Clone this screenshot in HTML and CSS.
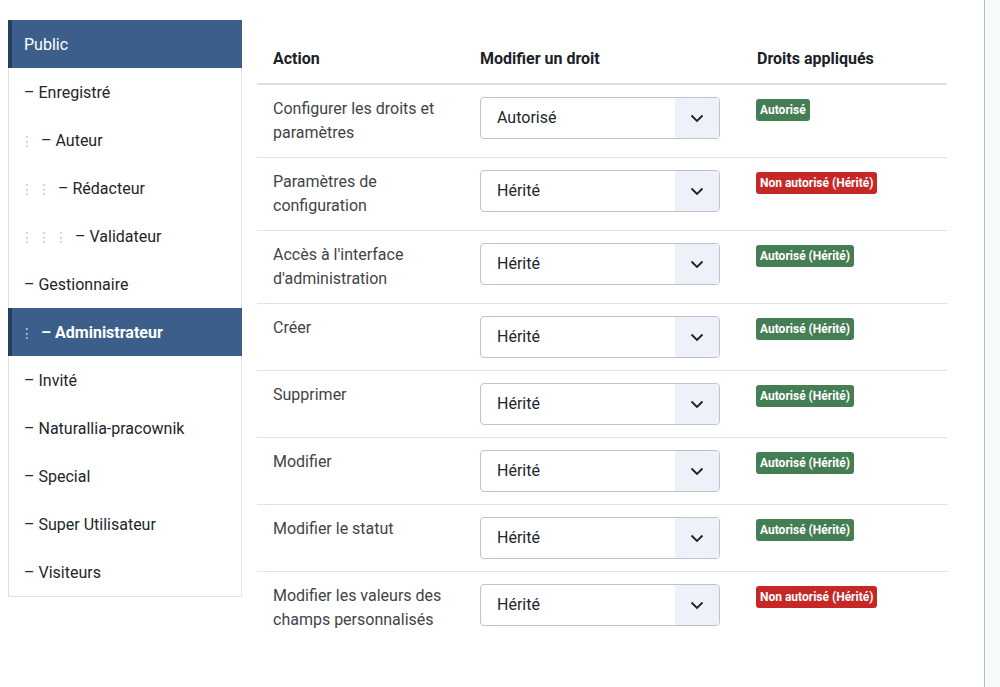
FILE: index.html
```html
<!DOCTYPE html>
<html lang="fr">
<head>
<meta charset="utf-8">
<title>Droits</title>
<link rel="stylesheet" href="styles.css">
</head>
<body>
<div class="page">
  <div class="main">
    <ul class="groups">
      <li class="item active">Public</li>
      <li class="item">– Enregistré</li>
      <li class="item"><span class="lvl">⋮</span>– Auteur</li>
      <li class="item"><span class="lvl">⋮</span><span class="lvl">⋮</span>– Rédacteur</li>
      <li class="item"><span class="lvl">⋮</span><span class="lvl">⋮</span><span class="lvl">⋮</span>– Validateur</li>
      <li class="item">– Gestionnaire</li>
      <li class="item active strong"><span class="lvl">⋮</span>– Administrateur</li>
      <li class="item">– Invité</li>
      <li class="item">– Naturallia-pracownik</li>
      <li class="item">– Special</li>
      <li class="item">– Super Utilisateur</li>
      <li class="item">– Visiteurs</li>
    </ul>
    <table class="rights">
      <thead>
        <tr><th class="c1">Action</th><th class="c2">Modifier un droit</th><th class="c3">Droits appliqués</th></tr>
      </thead>
      <tbody>
        <tr><td>Configurer les droits et paramètres</td><td><div class="select"><span class="val">Autorisé</span><span class="arrow"><svg width="16" height="16" viewBox="0 0 16 16"><path d="M2.5 5.5l5.5 5.5 5.5-5.5" fill="none" stroke="#1d2125" stroke-width="1.8"/></svg></span></div></td><td><span class="badge ok">Autorisé</span></td></tr>
        <tr><td>Paramètres de configuration</td><td><div class="select"><span class="val">Hérité</span><span class="arrow"><svg width="16" height="16" viewBox="0 0 16 16"><path d="M2.5 5.5l5.5 5.5 5.5-5.5" fill="none" stroke="#1d2125" stroke-width="1.8"/></svg></span></div></td><td><span class="badge no">Non autorisé (Hérité)</span></td></tr>
        <tr><td>Accès à l'interface d'administration</td><td><div class="select"><span class="val">Hérité</span><span class="arrow"><svg width="16" height="16" viewBox="0 0 16 16"><path d="M2.5 5.5l5.5 5.5 5.5-5.5" fill="none" stroke="#1d2125" stroke-width="1.8"/></svg></span></div></td><td><span class="badge ok">Autorisé (Hérité)</span></td></tr>
        <tr><td>Créer</td><td><div class="select"><span class="val">Hérité</span><span class="arrow"><svg width="16" height="16" viewBox="0 0 16 16"><path d="M2.5 5.5l5.5 5.5 5.5-5.5" fill="none" stroke="#1d2125" stroke-width="1.8"/></svg></span></div></td><td><span class="badge ok">Autorisé (Hérité)</span></td></tr>
        <tr><td>Supprimer</td><td><div class="select"><span class="val">Hérité</span><span class="arrow"><svg width="16" height="16" viewBox="0 0 16 16"><path d="M2.5 5.5l5.5 5.5 5.5-5.5" fill="none" stroke="#1d2125" stroke-width="1.8"/></svg></span></div></td><td><span class="badge ok">Autorisé (Hérité)</span></td></tr>
        <tr><td>Modifier</td><td><div class="select"><span class="val">Hérité</span><span class="arrow"><svg width="16" height="16" viewBox="0 0 16 16"><path d="M2.5 5.5l5.5 5.5 5.5-5.5" fill="none" stroke="#1d2125" stroke-width="1.8"/></svg></span></div></td><td><span class="badge ok">Autorisé (Hérité)</span></td></tr>
        <tr><td>Modifier le statut</td><td><div class="select"><span class="val">Hérité</span><span class="arrow"><svg width="16" height="16" viewBox="0 0 16 16"><path d="M2.5 5.5l5.5 5.5 5.5-5.5" fill="none" stroke="#1d2125" stroke-width="1.8"/></svg></span></div></td><td><span class="badge ok">Autorisé (Hérité)</span></td></tr>
        <tr class="last"><td>Modifier les valeurs des champs personnalisés</td><td><div class="select"><span class="val">Hérité</span><span class="arrow"><svg width="16" height="16" viewBox="0 0 16 16"><path d="M2.5 5.5l5.5 5.5 5.5-5.5" fill="none" stroke="#1d2125" stroke-width="1.8"/></svg></span></div></td><td><span class="badge no">Non autorisé (Hérité)</span></td></tr>
      </tbody>
    </table>
  </div>
  <div class="edge"></div>
</div>
</body>
</html>
```
FILE: styles.css
```css
html, body {
  margin: 0;
  padding: 0;
  background: #fff;
}
body {
  font-family: Roboto, "Liberation Sans", sans-serif;
  font-size: 16px;
  line-height: 24px;
  color: #22262a;
}
.page {
  display: flex;
  height: 687px;
}
.main {
  width: 976px;
  padding: 20px 0 0 8px;
  border-right: 1px solid #b4c0c4;
  display: flex;
  align-items: flex-start;
  gap: 15px;
}
.edge {
  flex: 1;
  background: #f6fafa;
}
.groups {
  list-style: none;
  margin: 0;
  padding: 0;
  width: 232px;
  border: 1px solid #dfe3e7;
  border-top: 0;
}
.item {
  height: 48px;
  box-sizing: border-box;
  padding: 13px 16px 11px 15px;
  display: flex;
  align-items: center;
  white-space: nowrap;
}
.item.active {
  background: #3c5e8b;
  color: #fff;
  border-left: 4px solid #253d5e;
  padding-left: 12px;
  margin-left: -1px;
  margin-right: -1px;
}
.item.strong {
  font-weight: 700;
}
.lvl {
  display: inline-block;
  width: 17px;
  text-indent: -4px;
  font-family: "DejaVu Sans", sans-serif;
  font-size: 14px;
  color: #c3c7cb;
  font-weight: 400;
}
.active .lvl {
  color: #c9d6e8;
}
.rights {
  width: 690px;
  border-collapse: collapse;
  margin-top: 15px;
  color: #3f4449;
}
.rights th {
  text-align: left;
  font-weight: 700;
  color: #1d2125;
  padding: 12px 16px;
  border-bottom: 2px solid #dcdfe3;
}
.c1 { width: 175px; }
.c2 { width: 245px; }
.rights td {
  vertical-align: top;
  padding: 12px 16px;
  border-bottom: 1px solid #dfe3e7;
}
.rights tr.last td {
  border-bottom: 0;
}
.rights td:first-child {
  padding-right: 8px;
}
.select {
  width: 240px;
  height: 42px;
  box-sizing: border-box;
  border: 1px solid #b9c4d0;
  border-radius: 4px;
  display: flex;
  overflow: hidden;
  color: #22262a;
  background: #fff;
}
.val {
  flex: 1;
  padding: 8px 16px;
}
.arrow {
  width: 44px;
  background: #eef2f8;
  display: flex;
  align-items: center;
  justify-content: center;
}
.badge {
  display: inline-block;
  font-size: 12px;
  line-height: 14px;
  font-weight: 700;
  color: #fff;
  padding: 4px 4px;
  border-radius: 3px;
  margin-left: -1px;
  margin-top: 1px;
}
.ok { background: #457d54; }
.no { background: #c52827; }
```
